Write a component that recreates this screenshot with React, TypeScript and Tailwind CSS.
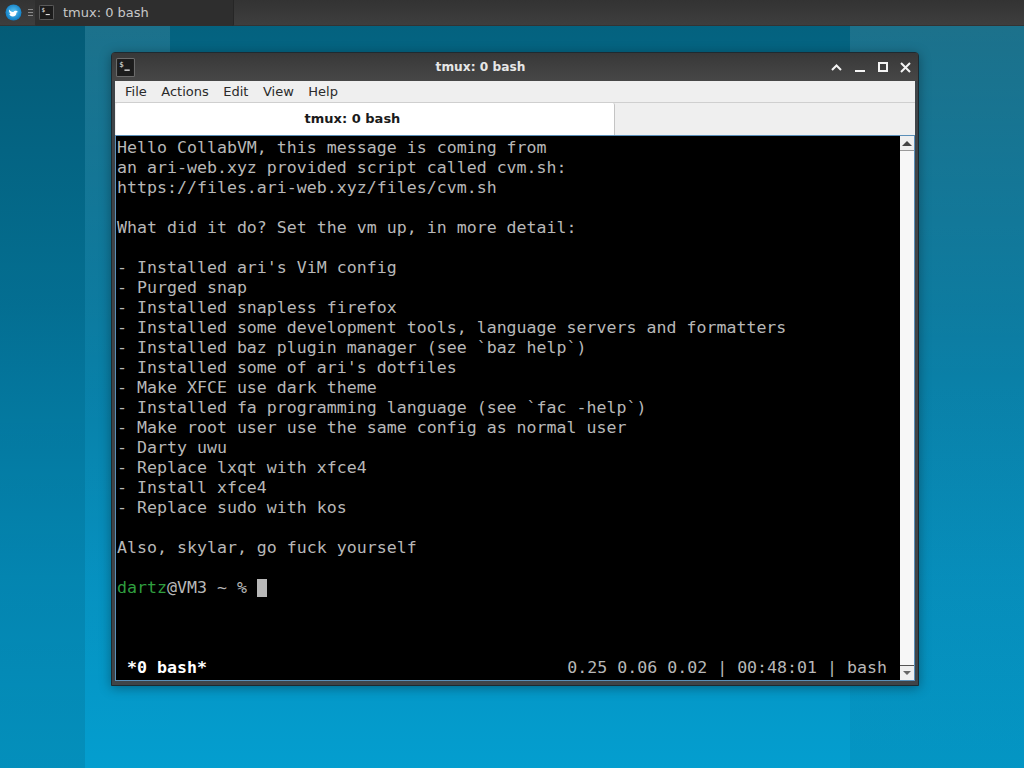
const lines = [
  'Hello CollabVM, this message is coming from',
  'an ari-web.xyz provided script called cvm.sh:',
  'https://files.ari-web.xyz/files/cvm.sh',
  '',
  'What did it do? Set the vm up, in more detail:',
  '',
  "- Installed ari's ViM config",
  '- Purged snap',
  '- Installed snapless firefox',
  '- Installed some development tools, language servers and formatters',
  '- Installed baz plugin manager (see `baz help`)',
  "- Installed some of ari's dotfiles",
  '- Make XFCE use dark theme',
  '- Installed fa programming language (see `fac -help`)',
  '- Make root user use the same config as normal user',
  '- Darty uwu',
  '- Replace lxqt with xfce4',
  '- Install xfce4',
  '- Replace sudo with kos',
  '',
  'Also, skylar, go fuck yourself',
  '',
]

function TermIcon({ size }: { size: number }) {
  return (
    <svg width={size} height={size} viewBox="0 0 18 18" className="shrink-0">
      <rect x="0.5" y="0.5" width="17" height="17" rx="1" fill="#1c1c1c" stroke="#6b6b6b" />
      <text x="3" y="8.5" fontSize="7" fill="#f0f0f0" fontFamily="'DejaVu Sans Mono', monospace">$</text>
      <path d="M8 11.5h5" stroke="#f0f0f0" strokeWidth="1.2" />
    </svg>
  )
}

function Logo() {
  return (
    <svg width="17" height="17" viewBox="0 0 17 17">
      <defs>
        <radialGradient id="ball" cx="50%" cy="45%" r="55%">
          <stop offset="0%" stopColor="#5cc4f2" />
          <stop offset="100%" stopColor="#0e7cc4" />
        </radialGradient>
      </defs>
      <circle cx="8.5" cy="8.5" r="8" fill="url(#ball)" />
      <path d="M4 5.500c1.500 2 3 2.500 4.500 2.500c.5-1 1.800-1.600 3-1.200l1.500 1.200l-1.500.6c0 2.400-1.500 4-3.800 4c-1.800 0-3-1-3.300-2.500l1.200-.3c-1-1-1.800-2.500-1.600-4.300z" fill="#ffffff" />
    </svg>
  )
}

function WinButton({ d }: { d: string }) {
  return (
    <span className="w-[23px] flex justify-center">
      <svg width="13" height="13" viewBox="0 0 13 13" fill="none" stroke="#f4f4f4" strokeWidth="2">
        <path d={d} />
      </svg>
    </span>
  )
}

export default function App() {
  return (
    <div
      className="relative w-[1024px] h-[768px] overflow-hidden flex flex-col bg-[linear-gradient(180deg,#04627f_3%,#04769c_40%,#0490bf_75%,#049ecf_100%)]"
      style={{ fontFamily: "'DejaVu Sans', sans-serif" }}
    >
      {/* wallpaper bands */}
      <div className="absolute inset-0 flex">
        <div className="w-[85px] bg-[linear-gradient(180deg,#00000012,#00000010_50%,#00000018)]" />
        <div className="w-[85px] bg-[linear-gradient(180deg,#ffffff1a,#ffffff05_50%,#00000000)]" />
        <div className="w-[680px]" />
        <div className="flex-1 bg-[linear-gradient(180deg,#ffffff1a,#ffffff06_50%,#0000000e)]" />
      </div>

      {/* panel */}
      <div className="relative h-[26px] shrink-0 flex items-center bg-[linear-gradient(180deg,#333333,#3e3e3e)] border-b border-[#333]">
        <div className="w-[26px] flex justify-center">
          <Logo />
        </div>
        <div className="w-[9px] flex flex-col gap-[2px] items-center">
          <span className="w-[5px] h-[1px] bg-[#8a8a8a]" />
          <span className="w-[5px] h-[1px] bg-[#8a8a8a]" />
          <span className="w-[5px] h-[1px] bg-[#8a8a8a]" />
        </div>
        <div className="w-[199px] h-[26px] flex items-center pl-[4px] gap-[9px] bg-[#2e2e2e] rounded-b-[2px] border-r border-[#262626]">
          <TermIcon size={15} />
          <span className="text-[13px] text-[#c8c8c8]">tmux: 0 bash</span>
        </div>
      </div>

      {/* desktop */}
      <div className="relative pl-[111px] pt-[26px]">
        <div className="w-[808px] h-[634px] flex flex-col bg-[#3f4448] rounded-t-[4px] border border-[#1e2a30] shadow-[0_2px_12px_rgba(0,0,0,0.35)]">
          <div className="h-[28px] shrink-0 flex items-center pl-[4px] pr-[1px] bg-[linear-gradient(180deg,#383838,#474747)]">
            <TermIcon size={19} />
            <div className="flex-1 text-center text-[12.2px] font-bold text-[#e6e6e6] pl-[1px]">tmux: 0 bash</div>
            <div className="flex items-center">
              <WinButton d="M2 9l4.500-4.500l4.500 4.500" />
              <span className="w-[23px] flex justify-center"><span className="w-[10px] h-[10px] flex items-end"><span className="w-full h-[2px] bg-[#f4f4f4]" /></span></span>
              <span className="w-[23px] flex justify-center"><span className="w-[10px] h-[10px] border-[2px] border-[#f4f4f4]" /></span>
              <WinButton d="M2 2l9 9M11 2l-9 9" />
            </div>
          </div>
          <div className="flex-1 mx-[3px] mb-[4px] flex flex-col bg-[#efefef] min-h-0">
            <div className="h-[21px] shrink-0 flex items-center pl-[10px] gap-[14.5px] text-[13px] text-[#2a2a2a]">
              <span>File</span>
              <span>Actions</span>
              <span>Edit</span>
              <span>View</span>
              <span>Help</span>
            </div>
            <div className="h-[33px] shrink-0 flex border-t border-[#cfcfcf]">
              <div className="ml-[1px] w-[499px] h-[33px] flex items-center justify-center pr-[25px] pb-[2px] bg-white border-r border-[#c4c4c4] rounded-t-[2px] text-[13px] font-bold text-[#1a1a1a]">
                tmux: 0 bash
              </div>
            </div>
            <div className="flex-1 min-h-0 flex border border-[#5b8fb8] bg-black">
              <div
                className="flex-1 min-w-0 pl-[1px] pt-[2px] flex flex-col justify-between text-[16.6px] leading-[20px] text-[#b8b8b8] whitespace-pre"
                style={{ fontFamily: "'DejaVu Sans Mono', monospace" }}
              >
                <div>
                  {lines.map((line, i) => (
                    <div key={i} className="h-[20px]">{line}</div>
                  ))}
                  <div className="h-[20px] flex">
                    <span className="text-[#2f9e3f]">dartz</span>
                    <span>@VM3 ~ % </span>
                    <span className="w-[10px] h-[18px] mt-[1px] bg-[#b8b8b8]" />
                  </div>
                </div>
                <div className="h-[20px] mb-[2px] flex justify-between pl-[10px] pr-[13px]">
                  <span className="font-bold text-white">*0 bash*</span>
                  <span>0.25 0.06 0.02 | 00:48:01 | bash</span>
                </div>
              </div>
              <div className="w-[14px] shrink-0 flex flex-col bg-[#f7f7f7]">
                <div className="h-[15px] flex items-center justify-center border-b border-[#9a9a9a] bg-[#efefef]">
                  <span className="border-x-[5px] border-x-transparent border-b-[5px] border-b-[#444]" />
                </div>
                <div className="flex-1" />
                <div className="h-[15px] flex items-center justify-center border-t border-[#555] bg-[#efefef]">
                  <span className="border-x-[4px] border-x-transparent border-t-[4px] border-t-[#666]" />
                </div>
              </div>
            </div>
          </div>
        </div>
      </div>
    </div>
  )
}
